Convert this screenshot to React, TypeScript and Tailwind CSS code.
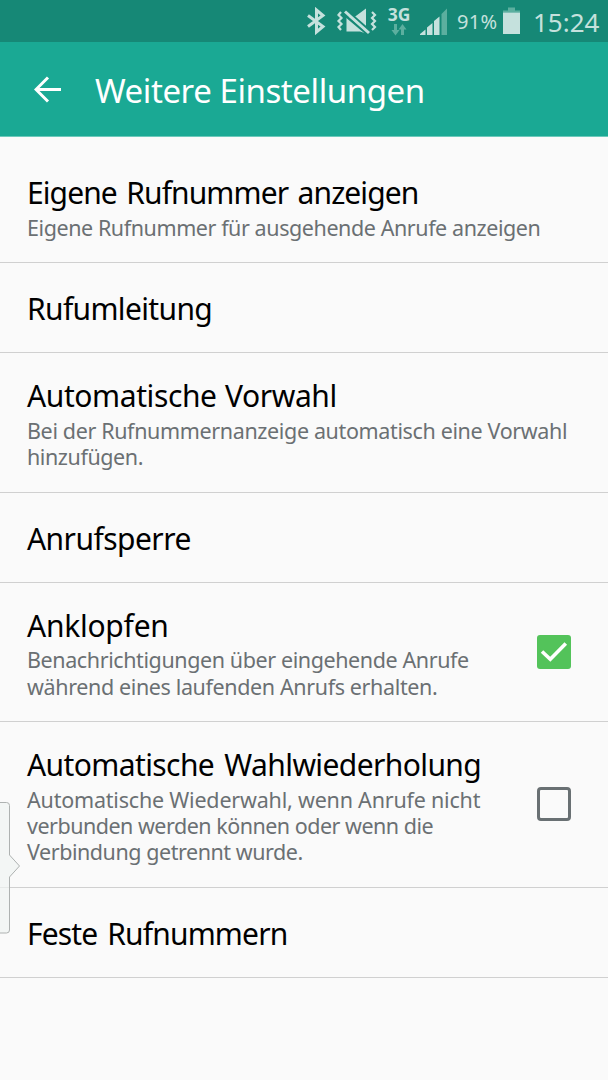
import type { ReactNode } from 'react'

interface TextLine {
  text: string
  tracking: string
}

interface Setting {
  title: string
  tracking: string
  lines?: TextLine[]
  checked?: boolean
}

const settings: Setting[] = [
  {
    title: 'Eigene Rufnummer anzeigen',
    tracking: 'tracking-[-0.9px] [word-spacing:2.5px]',
    lines: [{ text: 'Eigene Rufnummer für ausgehende Anrufe anzeigen', tracking: 'tracking-[-0.42px]' }],
  },
  { title: 'Rufumleitung', tracking: 'tracking-[-0.65px]' },
  {
    title: 'Automatische Vorwahl',
    tracking: 'tracking-[-0.4px] [word-spacing:1px]',
    lines: [
      { text: 'Bei der Rufnummernanzeige automatisch eine Vorwahl', tracking: 'tracking-[-0.36px]' },
      { text: 'hinzufügen.', tracking: 'tracking-[-0.42px]' },
    ],
  },
  { title: 'Anrufsperre', tracking: 'tracking-[-0.55px]' },
  {
    title: 'Anklopfen',
    tracking: 'tracking-[-0.25px]',
    lines: [
      { text: 'Benachrichtigungen über eingehende Anrufe', tracking: 'tracking-[-0.4px]' },
      { text: 'während eines laufenden Anrufs erhalten.', tracking: 'tracking-[-0.37px]' },
    ],
    checked: true,
  },
  {
    title: 'Automatische Wahlwiederholung',
    tracking: 'tracking-[-0.6px] [word-spacing:3px]',
    lines: [
      { text: 'Automatische Wiederwahl, wenn Anrufe nicht', tracking: 'tracking-[-0.2px]' },
      { text: 'verbunden werden können oder wenn die', tracking: 'tracking-[-0.5px]' },
      { text: 'Verbindung getrennt wurde.', tracking: 'tracking-[-0.45px]' },
    ],
    checked: false,
  },
  { title: 'Feste Rufnummern', tracking: 'tracking-[-0.85px] [word-spacing:3px]' },
]

function StatusBar() {
  return (
    <div className="flex h-[42px] items-center justify-end bg-[#168876] pr-[9px] text-[#c5e1dd]">
      <svg className="mr-[10px] h-[28px] w-[20px]" viewBox="0 0 20 28" fill="none" stroke="currentColor" strokeWidth="3">
        <path d="M2 8.500 17 19.500 10.500 25V3l6.500 5.500L2 19.500" />
      </svg>
      <svg className="mr-[10px] h-[28px] w-[41px]" viewBox="0 0 41 28" fill="none" stroke="currentColor">
        <path d="M10.500 10h8L30 1.500V26.500L24 24.500H10.500z" fill="currentColor" stroke="none" />
        <path d="M7 6.500 33 28.500M10 3 34 24" stroke="#168876" strokeWidth="2.500" />
        <path d="M9 4.500 33 26" strokeWidth="3" />
        <path d="M5 5 2.500 8 5.500 11 2.500 14l3 3-3 3L5 23M36 5l3 3-3 3 3 3-3 3 3 3-3 3" strokeWidth="2.200" />
      </svg>
      <div className="mr-[9px] flex h-[30px] w-[24px] flex-col items-center">
        <span className="text-[17.5px] leading-[17px] font-bold">3G</span>
        <svg className="mt-px h-[12px] w-[16px] text-[#5caf9f]" viewBox="0 0 16 12" fill="currentColor">
          <path d="M3 0h3v6h2.500L4.500 11.500.5 6H3zM10 11h3V5.500h2.500L11.500 0 7.500 5.500H10z" />
        </svg>
      </div>
      <svg className="mr-[10px] h-[28px] w-[27px]" viewBox="0 0 27 28" fill="currentColor">
        <path d="M0 28v-1l5.500-4.500V28zM7 20.500l5.500-4.500V28H7zM14 14l5.500-4.500V28H14z" />
        <path d="M21.500 7 27 1.500V28h-5.500z" fill="#5caf9f" />
      </svg>
      <span className="w-[41px] pt-[2px] text-[20px] tracking-[0.3px] whitespace-nowrap">91%</span>
      <svg className="mr-[13px] ml-[5px] h-[28px] w-[17px]" viewBox="0 0 17 28">
        <path d="M5 .5h7v3h5v2H0v-2h5z" fill="#5caf9f" />
        <path d="M0 5.500h17V27H0z" fill="currentColor" />
      </svg>
      <span className="w-[66px] pt-[3px] text-[26px] whitespace-nowrap">15:24</span>
    </div>
  )
}

function CheckBox({ checked }: { checked: boolean }) {
  return (
    <svg className="h-[34px] w-[34px] shrink-0" viewBox="0 0 34 34" fill="none">
      {checked ? (
        <>
          <rect width="34" height="34" rx="3" fill="#53c35a" />
          <path d="m5 16.500 8.300 7.800L28.800 8.500" stroke="#fff" strokeWidth="3.600" />
        </>
      ) : (
        <rect x="1.500" y="1.500" width="31" height="31" rx="2.500" stroke="#697073" strokeWidth="3" />
      )}
    </svg>
  )
}

interface RowProps {
  title: string
  tracking: string
  checked?: boolean
  children?: ReactNode
}

function Row({ title, tracking, checked, children }: RowProps) {
  return (
    <li className="flex items-center justify-between border-b border-[#d0d0d0] pr-[37px] pl-[27px]">
      <div className={children ? 'pt-[22px] pb-[21.5px]' : 'pt-[25px] pb-[22.7px]'}>
        <h2 className={`text-[30px] leading-[41.5px] whitespace-nowrap text-black ${tracking}`}>{title}</h2>
        {children && <div className="pt-px">{children}</div>}
      </div>
      {checked !== undefined && <CheckBox checked={checked} />}
    </li>
  )
}

export default function App() {
  return (
    <div className="relative h-[1080px] w-[608px] overflow-hidden bg-[#fafafa] font-['Noto_Sans',sans-serif]">
      <StatusBar />
      <header className="flex h-[95px] items-center border-b border-[#6cc9bb] bg-[#1aa994] pl-[34px] text-white">
        <svg className="mr-[34px] h-[28px] w-[27px]" viewBox="0 0 27 28" fill="none" stroke="currentColor" strokeWidth="3">
          <path d="M14 2.500 2 14.500l12 12M2 14.500h25" />
        </svg>
        <h1 className="pt-[4px] text-[33px] tracking-[-0.42px] whitespace-nowrap">Weitere Einstellungen</h1>
      </header>
      <ul className="pt-[13px]">
        {settings.map(({ title, tracking, lines, checked }) => (
          <Row key={title} title={title} tracking={tracking} checked={checked}>
            {lines?.map((line) => (
              <p
                key={line.text}
                className={`text-[21.5px] leading-[26.15px] whitespace-nowrap text-[#6b7073] ${line.tracking}`}
              >
                {line.text}
              </p>
            ))}
          </Row>
        ))}
      </ul>
      {/* edge panel handle */}
      <svg className="absolute top-[801px] left-0 h-[134px] w-[22px]" viewBox="0 0 22 134">
        <path
          d="M-2 1.500H6.500q3 0 3 3V54L19.500 65 9.500 76v53q0 3-3 3H-2z"
          fill="#f0f4f2"
          fillOpacity="0.7"
          stroke="#aeb2b1"
        />
      </svg>
    </div>
  )
}
